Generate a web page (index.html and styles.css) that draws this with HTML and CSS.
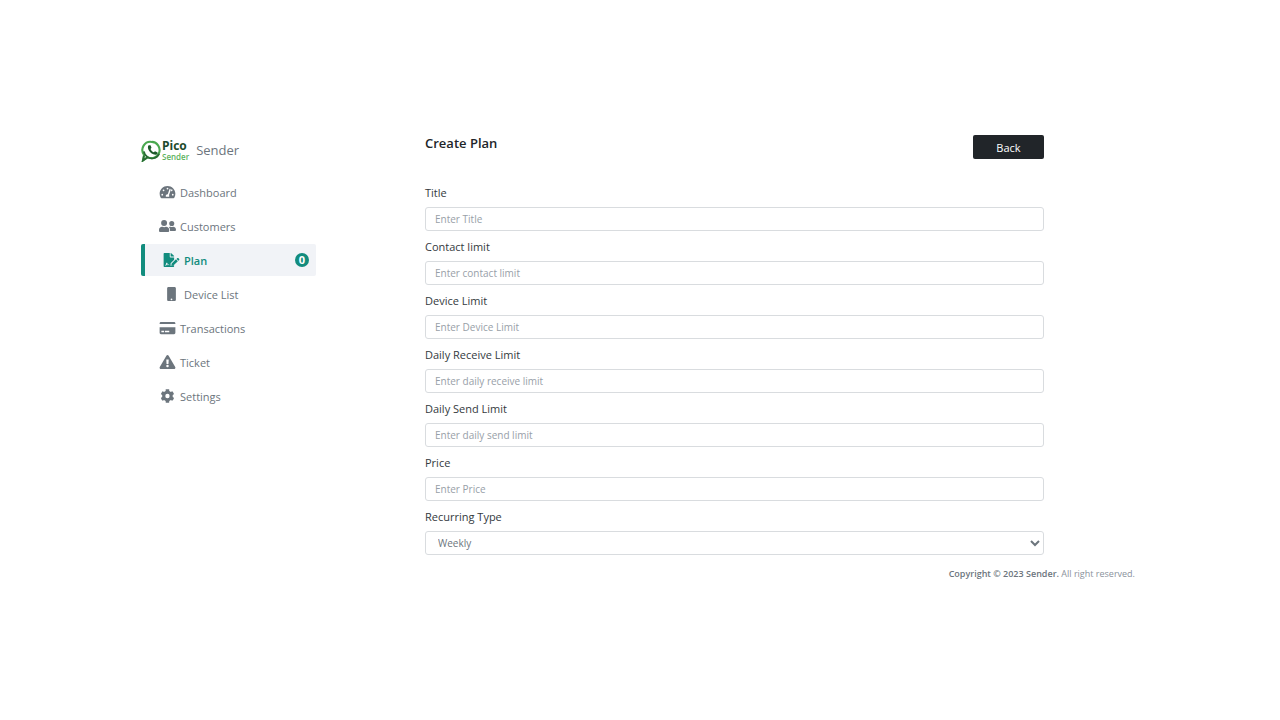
FILE: index.html
```html
<!DOCTYPE html>
<html lang="en">
<head>
  <meta charset="UTF-8" />
  <meta name="viewport" content="width=device-width, initial-scale=1.0"/>
  <title>Create Plan | Sender</title>
  <link rel="stylesheet" href="styles.css">
</head>
<body>
<div class="page">

  <!-- Sidebar -->
  <aside class="sidebar">
    <a class="brand" href="#">
      <svg class="brand-icon" viewBox="0 0 22 24">
        <path d="M11.500 3a8.500 8.500 0 1 1-4.500 16L2 22.500l1.200-6A8.500 8.500 0 0 1 11.500 3z" fill="#fff" stroke="#4aa84f" stroke-width="2.200"/>
        <path d="M3 13A8.500 8.500 0 0 0 7 19L2 22.500l1.200-5M6 18.500a8.500 8.500 0 0 0 13-3" fill="none" stroke="#2a6b35" stroke-width="1.800"/>
        <path d="M8 6.500c-2.500 2.500 1.500 9.500 7 10 1.800 0 2.800-1.500 2.300-2.500l-2.600-1.300-1.400 1.200c-1.500-.6-2.800-2-3.300-3.400l1-1.400-1-2.600z" fill="#1d5a2b"/>
      </svg>
      <span class="brand-mark">
        <b>Pico</b>
        <i>Sender</i>
      </span>
      <span class="brand-name">Sender</span>
    </a>
    <nav class="menu">
      <a href="#">
        <svg class="icon" viewBox="0 0 576 512"><path fill="currentColor" fill-rule="evenodd" d="M288 32C129 32 0 161 0 320c0 53 14 102 39 145 6 10 16 15 27 15h444c11 0 21-5 27-15 25-43 39-92 39-145C576 161 447 32 288 32zM288 96a32 32 0 1 1 0 64 32 32 0 1 1 0-64zM96 384a32 32 0 1 1 0-64 32 32 0 1 1 0 64zM144 224a32 32 0 1 1 0-64 32 32 0 1 1 0 64zM391 152c13 4 19 18 15 30l-62 184c5 9 8 20 8 32 0 12-3 23-8 32H232c-5-9-8-20-8-32 0-35 28-64 64-64 4 0 7 0 10 1l62-184c5-12 18-19 31-15zM432 224a32 32 0 0 1-17-27l14-35a32 32 0 1 1 3 62zM480 384a32 32 0 1 1 0-64 32 32 0 1 1 0 64z"/></svg>
        <span>Dashboard</span>
      </a>
      <a href="#">
        <svg class="icon" viewBox="0 0 640 512"><path fill="currentColor" d="M192 256a112 112 0 1 0 0-224 112 112 0 1 0 0 224zM269 288h-8a160 160 0 0 1-138 0h-8C51 288 0 339 0 403v29c0 27 21 48 48 48h288c27 0 48-21 48-48v-29c0-64-51-115-115-115zM480 256a96 96 0 1 0 0-192 96 96 0 1 0 0 192zM528 288h-4a128 128 0 0 1-88 0h-4c-20 0-39 6-56 16 25 27 40 62 40 102v42h176c27 0 48-21 48-48 0-62-50-112-112-112z"/></svg>
        <span>Customers</span>
      </a>
      <a class="active" href="#">
        <svg class="icon" viewBox="0 0 576 512"><path fill="currentColor" fill-rule="evenodd" d="M24 0h200v136c0 13 11 24 24 24h136v90L256 377v71h-26c-7 0-13-4-16-10-12-24-40-30-60-15l-16-48c-7-22-37-22-44 0l-18 55c-2 6-7 10-12 10v24h12c18 0 35-12 41-30l12-35 14 41c5 14 24 16 31 3l8-15c4-8 15-7 19 0 7 14 22 28 40 28h143v32c0 13-11 24-24 24H24c-13 0-24-11-24-24V24C0 11 11 0 24 0zM256 0h6c7 0 13 3 17 7l98 98c5 4 7 10 7 17v6H256zM288 392l163-162 68 68-162 161-61 5c-5 0-9-4-9-9zM569 221c9 10 9 25 0 34l-28 28-68-68 28-28c9-9 25-9 34 0z"/></svg>
        <span>Plan</span>
        <span class="badge">0</span>
      </a>
      <a class="indent" href="#">
        <svg class="icon" viewBox="0 0 512 512"><path fill="currentColor" fill-rule="evenodd" d="M368 0H144c-27 0-48 21-48 48v416c0 27 21 48 48 48h224c27 0 48-21 48-48V48c0-27-21-48-48-48zM256 480a32 32 0 1 1 0-64 32 32 0 1 1 0 64z"/></svg>
        <span>Device List</span>
      </a>
      <a href="#">
        <svg class="icon" viewBox="0 0 576 512"><path fill="currentColor" fill-rule="evenodd" d="M0 112V80c0-27 21-48 48-48h480c27 0 48 21 48 48v32zM0 224h576v208c0 27-21 48-48 48H48c-27 0-48-21-48-48zM64 360v48h96v-48zM192 360v48h160v-48z"/></svg>
        <span>Transactions</span>
      </a>
      <a href="#">
        <svg class="icon" viewBox="0 0 576 512"><path fill="currentColor" fill-rule="evenodd" d="M570 440L330 24c-18-32-65-32-83 0L6 440c-18 32 5 72 42 72h480c37 0 60-40 42-72zM288 448a46 46 0 1 1 0-92 46 46 0 1 1 0 92zM244 174c0-7 5-12 12-12h64c7 0 12 5 12 12l-8 146c0 7-5 12-12 12h-48c-7 0-12-5-12-12z"/></svg>
        <span>Ticket</span>
      </a>
      <a href="#">
        <svg class="icon" viewBox="0 0 512 512"><path fill="currentColor" fill-rule="evenodd" d="M487 316l-42-25c4-23 4-47 0-70l42-25c5-3 8-9 6-14-11-36-30-68-55-95-4-4-10-5-15-2l-43 24c-18-15-39-27-61-35V25c0-6-4-11-10-12-37-8-75-8-110 0-6 1-10 6-10 12v49c-22 8-43 20-61 35L85 85c-5-3-11-2-15 2-25 27-44 59-55 95-2 5 1 11 6 14l42 25c-4 23-4 47 0 70l-42 25c-5 3-8 9-6 14 11 36 30 68 55 95 4 4 10 5 15 2l43-24c18 15 39 27 61 35v49c0 6 4 11 10 12 37 8 75 8 110 0 6-1 10-6 10-12v-49c22-8 43-20 61-35l43 24c5 3 11 2 15-2 25-27 44-59 55-95 2-5-1-11-6-14zM254 336a80 80 0 1 1 0-160 80 80 0 1 1 0 160z"/></svg>
        <span>Settings</span>
      </a>
    </nav>
  </aside>

  <!-- Content -->
  <main class="content">
    <div class="panel">
      <header class="panel-head">
        <h1>Create Plan</h1>
        <button type="button" class="btn-back">Back</button>
      </header>

      <form>
        <div class="field">
          <label for="title">Title</label>
          <input type="text" id="title" placeholder="Enter Title">
        </div>
        <div class="field">
          <label for="contactLimit">Contact limit</label>
          <input type="text" id="contactLimit" placeholder="Enter contact limit">
        </div>
        <div class="field">
          <label for="deviceLimit">Device Limit</label>
          <input type="text" id="deviceLimit" placeholder="Enter Device Limit">
        </div>
        <div class="field">
          <label for="receiveLimit">Daily Receive Limit</label>
          <input type="text" id="receiveLimit" placeholder="Enter daily receive limit">
        </div>
        <div class="field">
          <label for="sendLimit">Daily Send Limit</label>
          <input type="text" id="sendLimit" placeholder="Enter daily send limit">
        </div>
        <div class="field">
          <label for="price">Price</label>
          <input type="text" id="price" placeholder="Enter Price">
        </div>
        <div class="field">
          <label for="recurring">Recurring Type</label>
          <select id="recurring">
            <option>Weekly</option>
            <option>Monthly</option>
            <option>Yearly</option>
          </select>
        </div>
      </form>
    </div>

    <footer><strong>Copyright © 2023 Sender.</strong> All right reserved.</footer>
  </main>

</div>
</body>
</html>
```
FILE: styles.css
```css
* {
  box-sizing: border-box;
}

body {
  margin: 0;
  background: #fff;
  color: #343a40;
  font-family: "Open Sans", sans-serif;
  font-size: 11px;
}

.page {
  display: flex;
  gap: 109px;
  padding: 134px 145px 40px 141px;
}

/* Sidebar */
.sidebar {
  flex: 0 0 175px;
}

.brand {
  display: flex;
  align-items: center;
  height: 32px;
  color: #6c757d;
  text-decoration: none;
}

.brand-icon {
  width: 21px;
  height: 23px;
}

.brand-mark {
  display: flex;
  flex-direction: column;
  margin-right: 7px;
}

.brand-mark b {
  color: #1d4a2b;
  font-size: 12px;
  line-height: 12px;
}

.brand-mark i {
  color: #5cb25d;
  font-size: 8px;
  font-style: normal;
  font-weight: 600;
  line-height: 9px;
}

.brand-name {
  font-size: 13px;
}

.menu {
  display: flex;
  flex-direction: column;
  gap: 2px;
  margin-top: 10px;
}

.menu a {
  display: flex;
  align-items: center;
  gap: 4px;
  height: 32px;
  padding: 0 7px 0 18px;
  color: #6c757d;
  text-decoration: none;
  border-radius: 2px;
}

.menu a.active {
  background: #f1f3f7;
  border-left: 4px solid #128c7e;
  color: #128c7e;
  font-weight: 600;
}

.menu a.indent {
  padding-left: 22px;
}

.icon {
  width: 17px;
  height: 14px;
}

.badge {
  width: 14px;
  height: 14px;
  margin-left: auto;
  border-radius: 50%;
  background: #128c7e;
  color: #fff;
  font-weight: 700;
  line-height: 14px;
  text-align: center;
}

/* Content */
.content {
  flex: 1;
}

.panel {
  margin-right: 91px;
}

.panel-head {
  display: flex;
  justify-content: space-between;
  height: 49px;
}

.panel-head h1 {
  margin: 0;
  color: #212529;
  font-size: 13px;
  font-weight: 600;
  line-height: 18px;
}

.btn-back {
  width: 71px;
  height: 24px;
  margin-top: 1px;
  padding: 0;
  border: 0;
  border-radius: 2px;
  background: #212529;
  color: #fff;
  font: inherit;
}

.field {
  height: 54px;
}

.field label {
  display: block;
  padding-bottom: 5px;
  line-height: 19px;
}

.field input,
.field select {
  display: block;
  width: 100%;
  height: 24px;
  padding: 0 9px;
  border: 1px solid #d9dcdf;
  border-radius: 3px;
  background: #fff;
  color: #6c757d;
  font-family: inherit;
  font-size: 10px;
}

.field select {
  padding: 0 0 0 8px;
}

.field input::placeholder {
  color: #98a0a8;
}

footer {
  margin-top: 6px;
  color: #8a929c;
  font-size: 9px;
  line-height: 14px;
  text-align: right;
}

footer strong {
  color: #6c757d;
  font-weight: 600;
}
```
